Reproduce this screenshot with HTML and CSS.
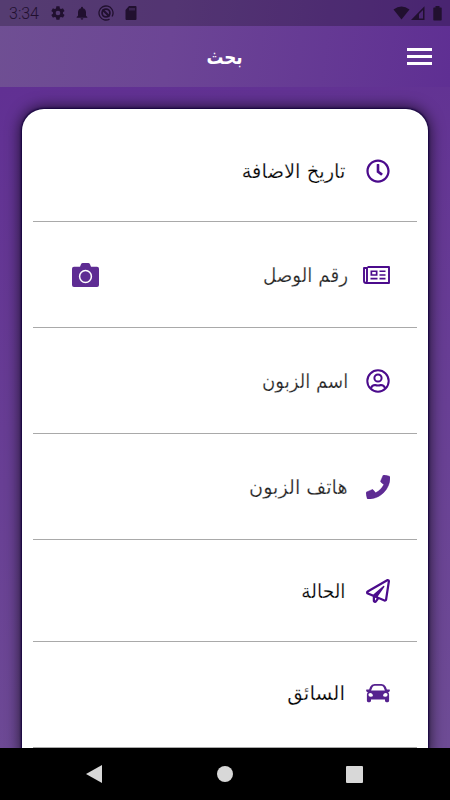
FILE: index.html
```html
<!DOCTYPE html>
<html lang="ar" dir="rtl">
<head>
<meta charset="utf-8">
<title>بحث</title>
<link rel="stylesheet" href="styles.css">
</head>
<body>
<div class="screen">
  <header class="appbar">
    <div class="status" dir="ltr">
      <span class="time">3:34</span>
      <svg class="gear" width="16" height="16" viewBox="0 0 24 24"><path fill-rule="evenodd" d="M19.4 13c.1-.7.1-1.300 0-2l2.100-1.600c.2-.2.3-.4.1-.7l-2-3.400c-.1-.2-.4-.3-.6-.2l-2.500 1a7 7 0 0 0-1.700-1l-.4-2.600c0-.3-.2-.5-.5-.5h-4c-.3 0-.5.200-.5.500L9 5.100a7 7 0 0 0-1.700 1l-2.500-1c-.2-.1-.5 0-.6.200l-2 3.400c-.1.200-.1.500.1.700L4.500 11a8 8 0 0 0 0 2l-2.200 1.600c-.2.200-.3.400-.1.700l2 3.400c.1.200.4.300.6.200l2.500-1a7 7 0 0 0 1.700 1l.4 2.600c0 .3.200.5.500.5h4c.3 0 .5-.2.500-.5l.4-2.600a7 7 0 0 0 1.700-1l2.500 1c.2.100.5 0 .6-.2l2-3.400c.2-.3.1-.5-.1-.7zM12 8.500a3.500 3.500 0 1 1 0 7 3.500 3.500 0 0 1 0-7z"/></svg>
      <svg class="bell" width="16" height="16" viewBox="0 0 24 24"><path d="M12 22a2 2 0 0 0 2-2h-4c0 1.100.9 2 2 2zm6-6v-5c0-3.100-1.600-5.600-4.500-6.300V4a1.500 1.500 0 0 0-3 0v.7C7.600 5.400 6 7.900 6 11v5l-2 2v1h16v-1z"/></svg>
      <svg class="sync" width="16" height="16" viewBox="0 0 16 16"><circle cx="8" cy="8" r="7" fill="none" stroke="currentColor" stroke-width="1.300" stroke-dasharray="40 4" transform="rotate(60 8 8)"/><circle cx="8" cy="8" r="3.900" fill="none" stroke="currentColor" stroke-width="1.800"/><path d="M4.500 4.500L11.500 11.500" stroke="currentColor" stroke-width="2.200"/></svg>
      <svg class="card-icon" width="12" height="14" viewBox="0 0 12 14"><path fill-rule="evenodd" d="M4 0h6.500Q11.500 0 11.500 1v12q0 1-1 1h-9q-1 0-1-1V4zM4.500 2v2.500h1V2zM6.500 2v2.500h1V2zM8.500 2v2.500h1V2z"/></svg>
      <span class="fill"></span>
      <svg width="17" height="14" viewBox="0 0 17 14"><path d="M8.500 13.500L.5 3.500Q8.500-2.500 16.500 3.500z"/></svg>
      <svg class="signal" width="14" height="14" viewBox="0 0 14 14"><path fill-rule="evenodd" d="M0 14L13.500.3V14zM8 8v4.500h4V4z"/></svg>
      <svg class="battery" width="9" height="15" viewBox="0 0 9 15"><path d="M2.500 0h4v1.500H8q.7 0 .7.700v11.600q0 .7-.7.700H1q-.7 0-.7-.7V2.200q0-.7.7-.7h1.500z"/></svg>
    </div>
    <div class="toolbar">
      <span class="menu"><i></i><i></i><i></i></span>
      <h1 class="title">بحث</h1>
    </div>
  </header>
  <main class="content">
    <section class="panel">
      <div class="row">
        <svg class="icon" viewBox="0 0 512 512"><path d="M256 8C119 8 8 119 8 256s111 248 248 248 248-111 248-248S393 8 256 8zm0 448c-110.500 0-200-89.500-200-200S145.500 56 256 56s200 89.500 200 200-89.500 200-200 200zm61.800-104.400l-84.900-61.700c-3.100-2.300-4.900-5.900-4.900-9.700V116c0-6.600 5.400-12 12-12h32c6.600 0 12 5.400 12 12v141.700l66.800 48.600c5.400 3.900 6.500 11.400 2.600 16.800L334.600 349c-3.900 5.300-11.400 6.500-16.800 2.600z"/></svg>
        <span class="label date">تاريخ الاضافة</span>
      </div>
      <div class="row field">
        <svg class="icon news" viewBox="0 0 27 18"><path d="M4.500 1H26v16H3Q1 17 1 15V2h3v13q0 1.800-1.500 2" fill="none" stroke="currentColor" stroke-width="1.900" stroke-linejoin="round"/><path fill-rule="evenodd" d="M7.500 4.500h7v5.300h-7zM9.200 6.100v2.100h3.600V6.100zM16.500 4.500h6V6h-6zM16.500 8.200h6v1.600h-6zM7.500 11.800h7v1.700h-7zM16.500 11.800h6v1.700h-6z"/></svg>
        <span class="label number">رقم الوصل</span>
        <svg class="camera" viewBox="0 0 27 24"><path d="M2 3.700h6l1-2.500Q9.500 0 10.800 0h5.400q1.300 0 1.800 1.200l1 2.500h6q2 0 2 2V22q0 2-2 2H2q-2 0-2-2V5.700q0-2 2-2z"/><circle cx="13.500" cy="13.500" r="5.900" fill="none" stroke="#fff" stroke-width="1.500"/></svg>
      </div>
      <div class="row field">
        <svg class="icon" viewBox="0 0 24 24"><g fill="none" stroke="currentColor" stroke-width="2"><circle cx="12" cy="12" r="10.700"/><circle cx="12" cy="9" r="3.600"/><path d="M4.800 19.400Q6 16 9 16q3 1 6 0 3 0 4.200 3.400"/></g></svg>
        <span class="label name">اسم الزبون</span>
      </div>
      <div class="row field">
        <svg class="icon" viewBox="0 0 512 512"><path class="solid" d="M493.400 24.600l-104-24c-11.300-2.600-22.900 3.300-27.500 13.900l-48 112c-4.200 9.800-1.400 21.300 6.900 28l60.600 49.600c-36 76.700-98.900 140.500-177.200 177.200l-49.600-60.600c-6.800-8.300-18.200-11.100-28-6.900l-112 48C3.900 366.500-2 378.100.6 389.400l24 104C27.100 504.200 36.700 512 48 512c256.100 0 464-207.500 464-464 0-11.200-7.700-20.900-18.600-23.400z"/></svg>
        <span class="label phone">هاتف الزبون</span>
      </div>
      <div class="row short">
        <svg class="icon" viewBox="0 0 512 512"><path d="M440 6.500L24 246.100c-34.400 19.900-31.100 70.800 5.700 85.900L144 379.600V464c0 46.400 59.200 65.500 86.600 28.600l43.800-59.100 111.900 46.200c5.900 2.400 12.100 3.600 18.300 3.600 8.200 0 16.300-2.100 23.600-6.200 12.800-7.200 21.600-20 23.900-34.500l59.400-387.200c6.100-40.100-36.900-68.800-71.500-48.900zM192 464v-64.600l36.600 15.100L192 464zm212.600-28.700l-153.800-63.500L391 169.500c10.700-15.500-9.500-33.500-23.700-21.200L155.800 332.600 48 288 464 48l-59.400 387.300z"/></svg>
        <span class="label state">الحالة</span>
      </div>
      <div class="row last">
        <svg class="icon" viewBox="0 0 24 24"><path fill-rule="evenodd" d="M8.500 3h7q3 0 4.300 2.800L20.900 8.500h2.400q.8 0 .6.800l-.3 1q-.2.600-.8.600h-.7q1 1 1 2.600v6.300q0 1.400-1.300 1.400h-1.400q-1.400 0-1.400-1.400v-1.200H5v1.200q0 1.400-1.400 1.400H2.200Q.9 21.200.9 19.800v-6.300q0-1.600 1-2.600h-.7q-.6 0-.8-.6l-.3-1q-.2-.8.6-.8h2.400l1.100-2.700Q5.500 3 8.500 3zM8.700 4.800q-1.800 0-2.400 1.600L5.100 9.600h13.800l-1.200-3.200q-.6-1.600-2.400-1.600zM2.400 13.800q0 1.900 2.200 1.900t2.300-.9q0-1.100-.8-2T4.300 11.900q-1.900 0-1.900 1.900zM21.600 13.800q0 1.900-2.200 1.900t-2.300-.9q0-1.100.8-2t1.800-.9q1.900 0 1.900 1.900z" fill="#56228f"/></svg>
        <span class="label driver">السائق</span>
      </div>
    </section>
  </main>
  <nav class="navbar" dir="ltr">
    <svg width="17" height="18" viewBox="0 0 17 18"><path d="M16 0v18L0 9z"/></svg>
    <svg width="16" height="16" viewBox="0 0 16 16"><circle cx="8" cy="8" r="8"/></svg>
    <svg width="17" height="17" viewBox="0 0 17 17"><rect width="17" height="17" rx="1"/></svg>
  </nav>
</div>
</body>
</html>
```
FILE: styles.css
```css
* { box-sizing: border-box; }
body { margin: 0; font-family: "DejaVu Sans", sans-serif; }
svg { display: block; flex: none; fill: currentColor; }

.screen {
  width: 450px;
  height: 800px;
  display: flex;
  flex-direction: column;
  overflow: hidden;
  background: linear-gradient(170deg, #613093 10%, #6f4e95 100%);
}

.appbar {
  height: 87px;
  background: linear-gradient(98deg, #6f4f93, #6c4595 38%, #5f2f93);
}
.status {
  height: 26px;
  display: flex;
  align-items: center;
  padding: 0 8px 0 9px;
  color: #21102f;
  background: rgba(0, 0, 0, .23);
}
.time { width: 41px; font: 300 16px/26px Roboto, sans-serif; padding-top: 2px; }
.bell { margin-left: 8px; }
.sync { margin-left: 8px; }
.card-icon { margin-left: 11px; }
.fill { flex: 1; }
.signal { margin-left: 1px; }
.battery { margin-left: 8px; }

.toolbar {
  height: 61px;
  display: grid;
  grid-template-columns: 1fr auto 1fr;
  align-items: center;
  padding: 0 18px;
}
.menu { display: grid; gap: 4px; width: 25px; }
.menu i { height: 3px; background: #fff; }
.title { margin: 0; color: #fff; font-size: 20px; line-height: 30px; transform: scaleX(.84); }

.content { flex: 1; min-height: 0; padding: 22px 22px 0; overflow: hidden; }
.panel {
  height: 660px;
  padding: 0 11px;
  background: #fff;
  border-radius: 22px;
  box-shadow: 0 0 2px 1px #12003c, 0 0 15px 1px rgba(0, 0, 0, .75);
}
.row {
  height: 113px;
  padding: 11px 27px 0 39px;
  display: flex;
  align-items: center;
  border-bottom: 1px solid #a9a9a9;
  color: #4b0b8c;
}
.field { height: 106px; padding-top: 0; }
.short { height: 102px; padding-top: 1px; }
.last { height: 106px; padding-top: 0; padding-bottom: 4px; }
.icon { width: 24px; height: 24px; }
.news { width: 27px; height: 18px; }
.solid { fill: #5e2c93; stroke: #4b0b8c; stroke-width: 10px; }
.camera { width: 27px; height: 24px; margin-right: auto; color: #5e2c93; }
.label {
  margin-right: 21px;
  color: #000;
  font-size: 20px;
  line-height: 30px;
  white-space: nowrap;
  transform-origin: right center;
  -webkit-text-stroke: .25px #fff;
}
.field .label { margin-right: 18px; color: #222; }
.field .number { margin-right: 15px; }
.date { transform: scaleX(.975); }
.number { transform: scaleX(.915); }
.name { transform: scaleX(.905); }
.phone { transform: scaleX(.96); }
.state { transform: scaleX(.93); }

.navbar {
  height: 52px;
  padding: 0 87px 0 86px;
  display: flex;
  justify-content: space-between;
  align-items: center;
  background: #000;
  color: #d8d8d8;
}
```
